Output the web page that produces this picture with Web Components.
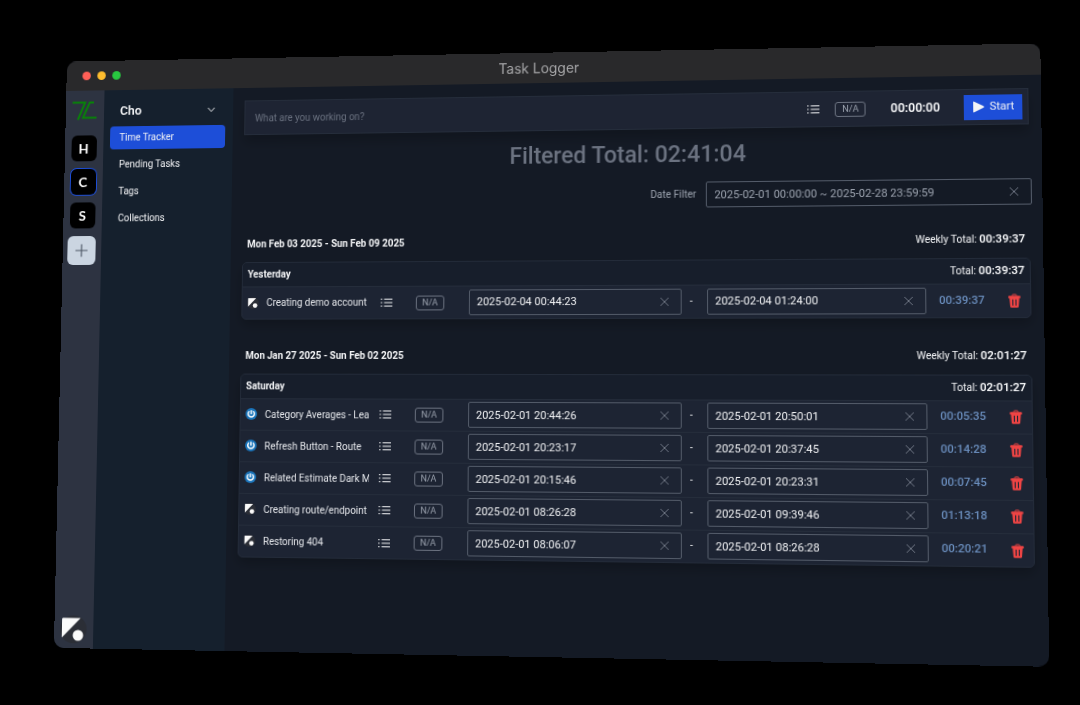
<!DOCTYPE html>
<html lang="en">
<head>
<meta charset="utf-8">
<meta name="viewport" content="width=device-width, initial-scale=1">
<title>Task Logger</title>
<style>
  body { margin: 0; background: #000; font-family: Roboto, "Open Sans", sans-serif; }
</style>
</head>
<body>
<app-stage>
  <app-window heading="Task Logger">
    <workspace-rail slot="rail"></workspace-rail>
    <side-nav slot="nav" workspace="Cho">
      <a href="#tracker" class="active" aria-current="page">Time Tracker</a>
      <a href="#pending">Pending Tasks</a>
      <a href="#tags">Tags</a>
      <a href="#collections">Collections</a>
    </side-nav>
    <timer-bar></timer-bar>
    <total-filter total="02:41:04" range="2025-02-01 00:00:00 ~ 2025-02-28 23:59:59"></total-filter>
    <week-log range="Mon Feb 03 2025 - Sun Feb 09 2025" total="00:39:37">
      <day-log day="Yesterday" total="00:39:37">
        <log-entry kind="local" name="Creating demo account" from="2025-02-04 00:44:23" to="2025-02-04 01:24:00" spent="00:39:37"></log-entry>
      </day-log>
    </week-log>
    <week-log range="Mon Jan 27 2025 - Sun Feb 02 2025" total="02:01:27">
      <day-log day="Saturday" total="02:01:27">
        <log-entry kind="remote" name="Category Averages - Lea" from="2025-02-01 20:44:26" to="2025-02-01 20:50:01" spent="00:05:35"></log-entry>
        <log-entry kind="remote" name="Refresh Button - Route" from="2025-02-01 20:23:17" to="2025-02-01 20:37:45" spent="00:14:28"></log-entry>
        <log-entry kind="remote" name="Related Estimate Dark M" from="2025-02-01 20:15:46" to="2025-02-01 20:23:31" spent="00:07:45"></log-entry>
        <log-entry kind="local" name="Creating route/endpoint" from="2025-02-01 08:26:28" to="2025-02-01 09:39:46" spent="01:13:18"></log-entry>
        <log-entry kind="local" name="Restoring 404" from="2025-02-01 08:06:07" to="2025-02-01 08:26:28" spent="00:20:21"></log-entry>
      </day-log>
    </week-log>
  </app-window>
</app-stage>

<script>
const ICONS = {
  list: '<svg viewBox="0 0 24 24" width="12" height="12" fill="none" stroke="currentColor" stroke-width="2"><path d="M7 5h17M7 12h17M7 19h17"/><path d="M0 5h3M0 12h3M0 19h3"/></svg>',
  close: '<svg viewBox="0 0 10 10" width="10" height="10" fill="none" stroke="currentColor" stroke-width="1"><path d="M1 1l8 8M9 1l-8 8"/></svg>',
  chevron: '<svg viewBox="0 0 10 10" width="10" height="10" fill="none" stroke="currentColor" stroke-width="1"><path d="M1.500 3l3.500 3.800L8.500 3"/></svg>',
  plus: '<svg viewBox="0 0 16 16" width="16" height="16" fill="none" stroke="currentColor" stroke-width="1.200"><path d="M8 1.500v13M1.500 8h13"/></svg>',
  play: '<svg viewBox="0 0 12 12" width="12" height="12" fill="currentColor"><path d="M1 1.200Q1 .3 2 .7L11 5.300q1 .7 0 1.400L2 11.300q-1 .4-1-.5z"/></svg>',
  trash: '<svg viewBox="0 0 24 28" width="12" height="14"><path d="M8 5V3.500Q8 2 9.500 2h5Q16 2 16 3.500V5" fill="none" stroke="currentColor" stroke-width="2"/><path d="M2 4.500h20q1.500 0 1.500 1.500v3H.5V6Q.5 4.500 2 4.500z" fill="currentColor"/><path fill-rule="evenodd" fill="currentColor" d="M2.500 8h19L20 25.500q-.2 2-2.200 2H6.200q-2 0-2.200-2zM8 11.500v12h2v-12zm6 0v12h2v-12z"/></svg>',
  local: '<svg viewBox="0 0 28 28" width="100%" height="100%"><circle cx="14" cy="14" r="14" fill="#2b2e36"/><path d="M3 2.500h18.500L2 22.500V4q0-1.500 1-1.500z" fill="#fafafa"/><circle cx="19" cy="20" r="5.500" fill="#fafafa"/></svg>',
  remote: '<svg viewBox="0 0 24 24" width="100%" height="100%"><circle cx="12" cy="12" r="12" fill="#1b75bb"/><g fill="none" stroke="#fff" stroke-width="3"><path d="M8 6.500a6.500 6.500 0 1 0 8 0"/><path d="M12 4.500v8"/></g></svg>',
  logo: '<svg viewBox="0 0 26 20" width="26" height="20" fill="none" stroke="#078507" stroke-width="2"><path d="M0 1.500h13.500L6 19.500"/><path d="M23 1.500h-4.500L11.500 17.500H26"/></svg>'
};

class AppElement extends HTMLElement {
  constructor() { super(); this.attachShadow({ mode: 'open' }); }
  attr(name) { return this.getAttribute(name) || ''; }
  connectedCallback() {
    this.shadowRoot.innerHTML = `<style>*{box-sizing:border-box}svg{display:block}button{display:inline-flex;align-items:center;justify-content:center;font:inherit;color:inherit;background:none;border:0;padding:0;margin:0}input{font:inherit;margin:0}${this.css()}</style>${this.html()}`;
  }
}

customElements.define('app-icon', class extends AppElement {
  css() { return ':host{display:inline-flex}'; }
  html() { return ICONS[this.attr('name')]; }
});

customElements.define('app-stage', class extends AppElement {
  css() { return ':host{display:flex;box-sizing:border-box;min-height:100vh;padding:49px 49px 51px 44px}::slotted(*){flex:1;min-width:0}'; }
  html() { return '<slot></slot>'; }
});

/* The window is one tilted sheet; everything inside is laid out flat. */
customElements.define('app-window', class extends AppElement {
  css() { return `
    :host{display:flex;flex-direction:column;border-radius:10px;overflow:hidden;background:#141a25;color:#f3f4f6;
      font-size:10px;line-height:16px;transform:perspective(1400px) rotateY(-5deg) rotateX(3deg)}
    header{display:grid;grid-template-columns:1fr auto 1fr;align-items:center;height:31px;padding:0 17px;background:#29292b}
    .lights{display:flex;gap:7px}
    .lights button{width:9px;height:9px;border-radius:50%}
    .red{background:#ff5f57}.amber{background:#febc2e}.green{background:#28c840}
    h1{margin:0;font:400 14px/20px Inter,sans-serif;color:#a6a6a8}
    .body{display:flex;flex:1}
    main{flex:1;min-width:0;padding:13px 12px 0}`; }
  html() { return `<header><div class="lights"><button class="red" aria-label="Close"></button><button class="amber" aria-label="Minimise"></button><button class="green" aria-label="Zoom"></button></div><h1>${this.attr('heading')}</h1></header>
    <div class="body"><slot name="rail"></slot><slot name="nav"></slot><main><slot></slot></main></div>`; }
});

customElements.define('workspace-rail', class extends AppElement {
  css() { return `
    :host{display:flex;flex-direction:column;align-items:center;gap:8px;flex:0 0 41px;box-sizing:border-box;padding:11px 1px 5px 0;background:#2d3341}
    .logo{margin-bottom:8px}
    button{width:27px;height:27px;border-radius:6px;background:#000;font:700 14px/27px Lato,sans-serif;color:#fff}
    .on{box-shadow:0 0 0 1px #1d4ed8}
    .add{width:30px;height:30px;background:#cbd5e1;color:#4b5563}
    .me{width:28px;height:28px;margin-top:auto}`; }
  html() { return `<app-icon class="logo" name="logo"></app-icon><button>H</button><button class="on">C</button><button>S</button><button class="add" aria-label="Add workspace"><app-icon name="plus"></app-icon></button><app-icon class="me" name="local"></app-icon>`; }
});

customElements.define('side-nav', class extends AppElement {
  css() { return `
    :host{display:block;flex:0 0 137px;box-sizing:border-box;padding:12px 8px 0 7px;background:#15202d}
    .pick{display:flex;justify-content:space-between;width:100%;height:20px;padding:0 10px;font-size:13px;font-weight:600}
    nav{display:flex;flex-direction:column;gap:4px;margin-top:6px}
    ::slotted(a){height:24px;line-height:24px;padding:0 10px;border-radius:4px;color:#f3f4f6;text-decoration:none}
    ::slotted(a.active){background:#1d4ed8}`; }
  html() { return `<button class="pick" aria-haspopup="listbox"><span>${this.attr('workspace')}</span><app-icon name="chevron"></app-icon></button><nav><slot></slot></nav>`; }
});

customElements.define('tag-badge', class extends AppElement {
  css() { return ':host{display:inline-block;box-sizing:border-box;height:15px;padding:0 5px;border:1px solid #6b7280;border-radius:3px;font-size:9px;line-height:13px;color:#9ca3af}'; }
  html() { return '<slot></slot>'; }
});

customElements.define('date-field', class extends AppElement {
  css() { return `
    :host{display:flex;align-items:center;gap:10px}
    label{color:#9ca3af}
    .box{display:flex;align-items:center;flex:1;min-width:0;height:26px;padding:0 11px 0 7px;border:1px solid #535b69;border-radius:2px;color:#6b7280}
    input{flex:1;min-width:0;width:0;height:24px;padding:0;border:0;outline:0;background:none;font-size:11px;color:var(--field-ink,#f3f4f6)}`; }
  html() {
    const label = this.attr('label');
    const shown = this.hasAttribute('show-label');
    return `${shown ? `<label for="f">${label}</label>` : ''}<div class="box"><input id="f" type="text" ${shown ? '' : `aria-label="${label}"`} value="${this.attr('value')}"><button aria-label="Clear"><app-icon name="close"></app-icon></button></div>`;
  }
});

customElements.define('timer-bar', class extends AppElement {
  css() { return `
    :host{display:flex;align-items:center;box-sizing:border-box;height:36px;padding:0 5px 0 10px;background:#1e2433;border:1px solid #252d3b;box-shadow:0 8px 12px rgba(0,0,0,.2)}
    input{flex:1;min-width:0;height:30px;padding:0;border:0;outline:0;background:none;color:#f3f4f6}
    input::placeholder{color:#6b7280;opacity:1}
    tag-badge{padding:0 6px;margin:0 24px 0 15px}
    time{font-size:12px;font-weight:600;margin-right:23px}
    .start{gap:5px;width:56px;height:25px;background:#1d4ed8;font-size:11px}`; }
  html() { return `<input type="text" aria-label="Task" placeholder="What are you working on?"><button aria-label="Collections"><app-icon name="list"></app-icon></button><tag-badge>N/A</tag-badge><time>00:00:00</time><button class="start"><app-icon name="play"></app-icon>Start</button>`; }
});

customElements.define('total-filter', class extends AppElement {
  css() { return `
    :host{display:block;padding-top:10px}
    h2{margin:0;font-size:23px;line-height:32px;font-weight:500;text-align:center;color:#6b7280}
    .row{display:flex;justify-content:flex-end;margin:11px -2px 0 0}
    date-field{flex:0 0 371px;--field-ink:#9ca3af}`; }
  html() { return `<h2>Filtered Total: ${this.attr('total')}</h2><div class="row"><date-field show-label label="Date Filter" value="${this.attr('range')}"></date-field></div>`; }
});

customElements.define('week-log', class extends AppElement {
  css() { return `
    :host{display:block;padding-top:26px}
    :host(:nth-of-type(2)){padding-top:29px}
    .head{display:flex;justify-content:space-between;padding:0 5px;line-height:16px;margin-bottom:10px}
    h3{margin:0;font-size:10px;font-weight:700}
    b{font-size:11px;font-weight:600}`; }
  html() { return `<div class="head"><h3>${this.attr('range')}</h3><span>Weekly Total: <b>${this.attr('total')}</b></span></div><slot></slot>`; }
});

customElements.define('day-log', class extends AppElement {
  css() { return `
    :host{display:block;border:1px solid #232b39;border-radius:5px;background:#1d2433;box-shadow:0 6px 12px rgba(0,0,0,.22);overflow:hidden}
    .head{display:flex;justify-content:space-between;height:24px;line-height:24px;padding:0 5px;background:#171e2b}
    b{font-weight:700}
    .head span b{font-size:11px;font-weight:600}
    table{width:100%;table-layout:fixed;border-collapse:collapse}
    td{height:32px;padding:0;text-align:center;vertical-align:middle;border-top:1px solid #252d3b}
    td>*{vertical-align:middle}
    .kind{width:25px}.name{width:108px}.list{width:31px}.tag{width:59px}.gap{width:10px}.dash{width:25px}.spent{width:68px}.del{width:31px}
    td.kind{text-align:left;padding-left:5px}
    .kind app-icon{display:block;width:12px;height:12px}
    .name input{display:block;width:100%;height:20px;padding:0;border:0;outline:0;background:none;color:#e5e7eb}
    date-field{text-align:left}
    td.dash{text-align:left;padding-left:8px}
    td.spent{font-size:11px;font-weight:500;color:#6b8fbf}
    .del button{color:#ef4444}`; }
  html() {
    const rows = [...this.querySelectorAll('log-entry')].map(e => {
      const g = n => e.getAttribute(n);
      return `<tr><td class="kind"><app-icon name="${g('kind')}"></app-icon></td><td class="name"><input type="text" aria-label="Task name" value="${g('name')}"></td><td class="list"><button aria-label="Collection"><app-icon name="list"></app-icon></button></td><td class="tag"><tag-badge>N/A</tag-badge></td><td class="gap"></td><td><date-field label="Start time" value="${g('from')}"></date-field></td><td class="dash">-</td><td><date-field label="End time" value="${g('to')}"></date-field></td><td class="spent">${g('spent')}</td><td class="del"><button aria-label="Delete entry"><app-icon name="trash"></app-icon></button></td></tr>`;
    }).join('');
    return `<div class="head"><b>${this.attr('day')}</b><span>Total: <b>${this.attr('total')}</b></span></div><table aria-label="${this.attr('day')}"><tbody>${rows}</tbody></table>`;
  }
});

customElements.define('log-entry', class extends AppElement {
  css() { return ':host{display:none}'; }
  html() { return ''; }
});
</script>
</body>
</html>
